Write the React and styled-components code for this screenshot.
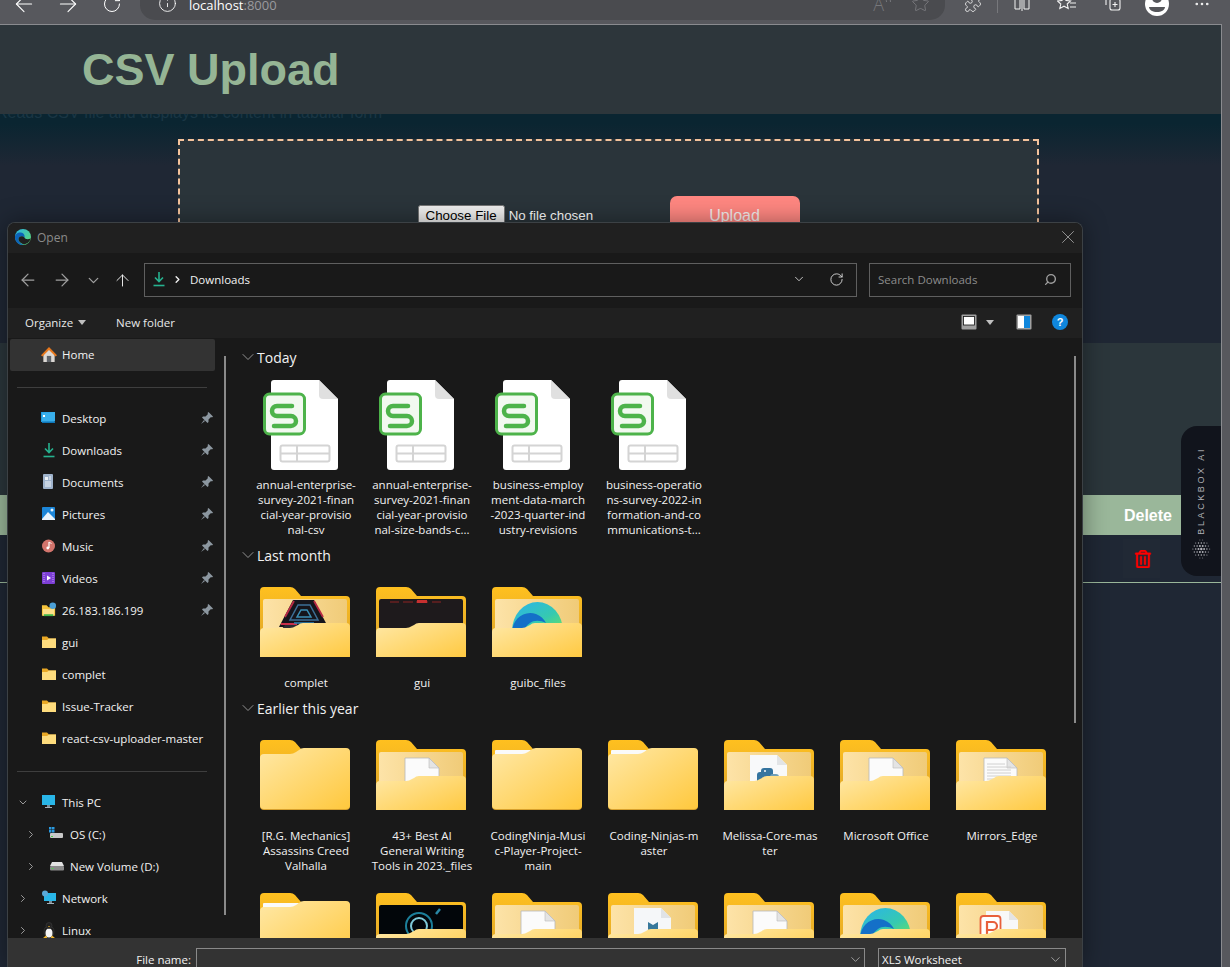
import React from "react"
import styled, { createGlobalStyle } from "styled-components"
import {
  ArrowLeft,
  ArrowRight,
  ArrowUp,
  ChevronDown,
  ChevronRight,
  Ellipsis,
  Info,
  Puzzle,
  RotateCw,
  Search,
  Star,
  X,
} from "lucide-react"
import { FaRegTrashAlt } from "react-icons/fa"

const GlobalStyle = createGlobalStyle`
  html, body {
    margin: 0;
    padding: 0;
    background: #57585d;
    overflow: hidden;
  }
  * {
    box-sizing: border-box;
  }
`

const winFont = `"Open Sans", "Noto Sans", sans-serif`
const webFont = `"Liberation Sans", Arial, sans-serif`

const quickAccess = [
  { icon: "desktop", label: "Desktop", pin: true },
  { icon: "download", label: "Downloads", pin: true },
  { icon: "document", label: "Documents", pin: true },
  { icon: "picture", label: "Pictures", pin: true },
  { icon: "music", label: "Music", pin: true },
  { icon: "video", label: "Videos", pin: true },
  { icon: "netfolder", label: "26.183.186.199", pin: true },
  { icon: "folder", label: "gui" },
  { icon: "folder", label: "complet" },
  { icon: "folder", label: "Issue-Tracker" },
  { icon: "folder", label: "react-csv-uploader-master" },
]

const drives = [
  { icon: "pc", label: "This PC", chevron: "down" },
  { icon: "osdrive", label: "OS (C:)", chevron: "right", depth: 1 },
  { icon: "drive", label: "New Volume (D:)", chevron: "right", depth: 1 },
  { icon: "network", label: "Network", chevron: "right" },
  { icon: "linux", label: "Linux", chevron: "right" },
]

const todayFiles = [
  ["annual-enterprise-", "survey-2021-finan", "cial-year-provisio", "nal-csv"],
  ["annual-enterprise-", "survey-2021-finan", "cial-year-provisio", "nal-size-bands-c..."],
  ["business-employ", "ment-data-march", "-2023-quarter-ind", "ustry-revisions"],
  ["business-operatio", "ns-survey-2022-in", "formation-and-co", "mmunications-t..."],
]

const lastMonth = [
  { kind: "complet", lines: ["complet"] },
  { kind: "gui", lines: ["gui"] },
  { kind: "edge", lines: ["guibc_files"] },
]

const earlier = [
  { kind: "plain", lines: ["[R.G. Mechanics]", "Assassins Creed", "Valhalla"] },
  { kind: "doc", lines: ["43+ Best AI", "General Writing", "Tools in 2023._files"] },
  { kind: "sliver", lines: ["CodingNinja-Musi", "c-Player-Project-", "main"] },
  { kind: "sliver", lines: ["Coding-Ninjas-m", "aster"] },
  { kind: "python", lines: ["Melissa-Core-mas", "ter"] },
  { kind: "doc", lines: ["Microsoft Office"] },
  { kind: "lines", lines: ["Mirrors_Edge"] },
  { kind: "sliver", lines: [""] },
  { kind: "dark", lines: [""] },
  { kind: "doc", lines: [""] },
  { kind: "mail", lines: [""] },
  { kind: "doc", lines: [""] },
  { kind: "edge", lines: [""] },
  { kind: "wps", lines: [""] },
]

const EdgeLogo = () => (
  <svg width="16" height="16" viewBox="0 0 16 16">
    <defs>
      <linearGradient id="edgeTop" x1="0" y1="0" x2="1" y2="1">
        <stop offset="0" stopColor="#2bb5e8" />
        <stop offset="1" stopColor="#62dd6a" />
      </linearGradient>
    </defs>
    <circle cx="8" cy="8" r="8" fill="url(#edgeTop)" />
    <path d="M0 8c0-3 3-5 6-4.500 3 .5 4 3 3.500 5-2-2-6-1.500-6 2 0 2.500 2.500 4.500 5 5.300C4 16.500 0 13 0 8z" fill="#0c63b8" />
    <path d="M9.500 8.500c.5 1.500 3 2.500 6.200 1-1 3.500-4 6-7.500 5.800-2.500-1-4.700-3-4.700-5 0-3.500 4-4 6-1.800z" fill="#1f1f1f" />
  </svg>
)

const SidebarIcon = ({ name }) => {
  switch (name) {
    case "home":
      return (
        <svg width="17" height="17" viewBox="0 0 17 17">
          <path d="M2.500 8v8.500h12V8L8.500 2.500z" fill="#dcd8d4" />
          <path d="M0 9.200 8.500.5l8.500 8.700-1.500 1.500-7-7-7 7z" fill="#e8781c" />
          <rect x="6.200" y="10" width="4.600" height="6.500" fill="#5f6368" />
        </svg>
      )
    case "desktop":
      return (
        <svg width="16" height="16" viewBox="0 0 16 16">
          <path d="M0 2h13v10H0z" fill="#1e9be0" />
          <path d="M1 2.500 14 2v9.500L1 12z" fill="#39aeea" />
          <rect x="2" y="5" width="2" height="2" fill="#fff" />
          <rect x="1" y="11.500" width="13" height="1.500" fill="#0e76b8" />
        </svg>
      )
    case "download":
      return (
        <svg width="16" height="16" viewBox="0 0 16 16" fill="none" stroke="#26b28f" strokeWidth="1.600">
          <path d="M8 1v9M4 6.500 8 10.500l4-4" />
          <path d="M2.500 14.500h11" />
        </svg>
      )
    case "document":
      return (
        <svg width="16" height="16" viewBox="0 0 16 16">
          <rect x="2" y="0" width="10" height="15" rx="1" fill="#9fb3cc" />
          <rect x="4" y="3" width="3" height="3" fill="#eef3f8" />
          <path d="M4 8h6M4 10h6M4 12h6" stroke="#eef3f8" />
          <path d="M8 3h2M8 5h2" stroke="#eef3f8" />
        </svg>
      )
    case "picture":
      return (
        <svg width="16" height="16" viewBox="0 0 16 16">
          <rect x="1" y="1" width="13" height="13" rx="1" fill="#1c86d8" />
          <path d="M1 13 7 6l7 7v1H1z" fill="#e9f4fc" />
          <circle cx="11" cy="4" r="1.500" fill="#e9f4fc" />
        </svg>
      )
    case "music":
      return (
        <svg width="16" height="16" viewBox="0 0 16 16">
          <circle cx="7.500" cy="8" r="6.500" fill="#d2746c" />
          <path d="M8 4v6" stroke="#fff" strokeWidth="1.200" />
          <path d="M8 4c1 1 2 1 2.500 1.500" stroke="#fff" fill="none" />
          <circle cx="6.800" cy="10" r="1.400" fill="#fff" />
        </svg>
      )
    case "video":
      return (
        <svg width="16" height="16" viewBox="0 0 16 16">
          <rect x="1" y="2" width="13" height="12" rx="1" fill="#7d3fd6" />
          <path d="M3 3v10M12 3v10" stroke="#c6a4f0" strokeDasharray="1 1" />
          <path d="M6 5.500v5l4-2.500z" fill="#fff" />
        </svg>
      )
    case "netfolder":
      return (
        <svg width="17" height="16" viewBox="0 0 17 16">
          <path d="M1 3h5l2 2h7v9H1z" fill="#f5c33b" />
          <rect x="2" y="7" width="12" height="7" fill="#fde08a" />
          <rect x="3" y="12.500" width="10" height="2" fill="#43b649" />
          <circle cx="12.500" cy="3.500" r="3.500" fill="#4b9fd6" />
        </svg>
      )
    case "folder":
      return (
        <svg width="16" height="16" viewBox="0 0 16 16">
          <path d="M1 2.500h5l2 2h7V14H1z" fill="#e9a825" />
          <path d="M1 6h5l2-1.500h7V14H1z" fill="#fedc7d" />
        </svg>
      )
    case "pc":
      return (
        <svg width="16" height="16" viewBox="0 0 16 16">
          <rect x="1" y="1" width="13" height="10" fill="#29b6e8" />
          <rect x="6" y="11" width="3" height="2" fill="#7a8b96" />
          <rect x="4" y="13" width="7" height="1" fill="#a3b2bb" />
        </svg>
      )
    case "osdrive":
      return (
        <svg width="16" height="16" viewBox="0 0 16 16">
          <rect x="0" y="1" width="2.500" height="2.500" fill="#2a9ae0" />
          <rect x="3" y="1" width="2.500" height="2.500" fill="#2a9ae0" />
          <rect x="0" y="4" width="2.500" height="2.500" fill="#2a9ae0" />
          <rect x="3" y="4" width="2.500" height="2.500" fill="#2a9ae0" />
          <rect x="1" y="7" width="13" height="5" rx="1" fill="#c8c8c8" />
          <rect x="2" y="10" width="2" height="1" fill="#4fd14f" />
        </svg>
      )
    case "drive":
      return (
        <svg width="16" height="16" viewBox="0 0 16 16">
          <path d="M3 4h10l2 4H1z" fill="#e2e2e2" />
          <rect x="1" y="8" width="14" height="4.500" rx="1" fill="#8b8b8b" />
          <rect x="2.500" y="10" width="2" height="1" fill="#4fd14f" />
        </svg>
      )
    case "network":
      return (
        <svg width="16" height="16" viewBox="0 0 16 16">
          <rect x="3" y="3" width="12" height="8" fill="#29b6e8" />
          <circle cx="4" cy="3.500" r="3" fill="#5aa9d8" />
          <rect x="8" y="11" width="3" height="2" fill="#7a8b96" />
          <rect x="6" y="13" width="7" height="1" fill="#a3b2bb" />
        </svg>
      )
    case "linux":
      return (
        <svg width="16" height="17" viewBox="0 0 16 17">
          <ellipse cx="8" cy="9.500" rx="5" ry="6" fill="#1b1b1b" stroke="#444" strokeWidth=".5" />
          <ellipse cx="8" cy="11" rx="3.500" ry="4.500" fill="#f4f4f4" />
          <circle cx="8" cy="3.500" r="3" fill="#222" stroke="#444" strokeWidth=".5" />
          <path d="M7 4h2l-1 1.200z" fill="#f0b429" />
          <path d="M2 16l3-2.500 1.500 3zM14 16l-3-2.500-1.500 3z" fill="#f0b429" />
        </svg>
      )
    default:
      return null
  }
}

const PinIcon = () => (
  <svg width="14" height="14" viewBox="0 0 14 14">
    <path d="M8.500 1 13 5.500 12 6.500 11 6 8.500 8.500 8.500 11 7.500 12 2 6.500 3 5.500 5.500 5.500 8 3 7.500 2z" fill="#8c97a0" />
    <path d="M4 9 1 13l4-3z" fill="#8c97a0" />
  </svg>
)

const SpreadsheetIcon = () => (
  <FileSvg width="90" height="92" viewBox="0 0 90 92">
    <path d="M13 0h45l19 19v68a3 3 0 0 1-3 3H13a3 3 0 0 1-3-3V3a3 3 0 0 1 3-3z" fill="#fff" />
    <path d="M58 0l19 19H62a4 4 0 0 1-4-4z" fill="#e0e0e0" />
    <rect x="3.500" y="14" width="40" height="40" rx="5" fill="#f2f9f0" stroke="#4db34a" strokeWidth="3" />
    <path d="M31 26H16a5 5 0 0 0 0 10h14a5 5 0 0 1 0 10H13" fill="none" stroke="#4db34a" strokeWidth="4.500" strokeLinecap="round" />
    <rect x="19.500" y="65.500" width="49" height="16" rx="2" fill="none" stroke="#d4d4d4" strokeWidth="2" />
    <path d="M19.500 73.500h49M36 65.500v16" stroke="#d4d4d4" strokeWidth="2" />
  </FileSvg>
)

const Paper = ({ x = 29, y = 18, w = 34 }) => (
  <g>
    <path d={`M${x} ${y}h${w - 10}l10 10v20h-${w}z`} fill="#fbfbfb" stroke="#b9b9b9" strokeWidth=".8" />
    <path d={`M${x + w - 10} ${y}l10 10h-10z`} fill="#e4e4e4" stroke="#b9b9b9" strokeWidth=".6" />
  </g>
)

const FolderInner = ({ kind }) => {
  switch (kind) {
    case "doc":
      return <Paper />
    case "python":
      return (
        <g>
          <path d="M26 15h27l10 10v25H26z" fill="#f8f9fa" />
          <path d="M53 15l10 10H53z" fill="#e2e4e6" />
          <rect x="33" y="32" width="14" height="12" rx="3" fill="#35749f" />
          <rect x="37" y="28" width="12" height="10" rx="3" fill="#35749f" />
          <rect x="46" y="34" width="9" height="10" rx="3" fill="#6f9fb8" />
          <circle cx="41" cy="31" r="1" fill="#f8f9fa" />
        </g>
      )
    case "lines":
      return (
        <g>
          <Paper x={28} y={18} w={33} />
          <path d="M31 24h18M31 27h24M31 30h24M31 33h24M31 36h24M31 39h24" stroke="#d0d0d0" strokeWidth="1" />
        </g>
      )
    case "edge":
      return (
        <g>
          <path d="M20 44a25.500 29 0 0 1 51 0z" fill="url(#folderEdge)" />
          <path d="M20 46c0-14 12-23 24-19 5 2 8 5 10 9-6-3-12-3-16 0-3 2-6 6-8 10z" fill="#1470c8" />
        </g>
      )
    case "complet":
      return (
        <g>
          <path d="M33 13h21l14 27H19z" fill="#15151c" />
          <path d="M38 18h12l8 15H30z" fill="none" stroke="#3d6f96" strokeWidth="1.500" />
          <path d="M41 23h6l4 7H37z" fill="none" stroke="#3b8fb5" strokeWidth="1.500" />
          <path d="M25 30l9-16M63 30l-9-16" stroke="#b72a45" strokeWidth="1.800" />
          <path d="M21 37h16M52 37h16" stroke="#c9304a" strokeWidth="1.800" />
          <path d="M34 36h20" stroke="#2c86b8" strokeWidth="1.500" />
          <path d="M17 48l8-10h12v10z" fill="#2c2c34" />
        </g>
      )
    case "gui":
      return (
        <g>
          <rect x="3" y="12" width="84" height="30" rx="2" fill="#1e1a1c" />
          <path d="M14 15h9M27 15h10M40 15h12M56 15h9" stroke="#8e2323" strokeWidth="1.200" />
          <rect x="41" y="13" width="10" height="3" fill="#c83030" />
        </g>
      )
    case "dark":
      return (
        <g>
          <rect x="3" y="12" width="84" height="36" rx="2" fill="#02060a" />
          <circle cx="43" cy="33" r="13" fill="none" stroke="#1c7f9a" strokeWidth="2" />
          <circle cx="43" cy="33" r="8" fill="none" stroke="#7fc9d8" strokeWidth="2" />
          <path d="M64 16l-4 5" stroke="#2a88a6" strokeWidth="2.500" />
        </g>
      )
    case "mail":
      return (
        <g>
          <path d="M26 15h27l10 10v25H26z" fill="#f5f7f9" />
          <path d="M53 15l10 10H53z" fill="#e0e3e6" />
          <path d="M40 29l5 3 5-3v10H40z" fill="#37789b" />
        </g>
      )
    case "wps":
      return (
        <g>
          <path d="M30 18h23l9 9v24H30z" fill="#f8f8f8" />
          <path d="M53 18l9 9h-9z" fill="#e4e4e4" />
          <rect x="24.500" y="23" width="20" height="28" rx="3" fill="#fff" stroke="#e8603c" strokeWidth="1.800" />
          <path d="M31 48V29h6a4 4 0 0 1 0 8h-6" fill="none" stroke="#e8603c" strokeWidth="2.200" />
        </g>
      )
    default:
      return null
  }
}

const Folder = ({ kind }) => {
  const closed = kind === "plain" || kind === "sliver"
  const frontPath = closed
    ? "M0 19a4 4 0 0 1 4-4h26q3 0 6-2l3-2q2-2 5-2h42a4 4 0 0 1 4 4v53a4 4 0 0 1-4 4H4a4 4 0 0 1-4-4z"
    : "M0 46a4 4 0 0 1 4-4h26q3 0 6-2l2-1q2-2 5-2h43a4 4 0 0 1 4 4v29a4 4 0 0 1-4 4H4a4 4 0 0 1-4-4z"
  return (
    <svg width="90" height="70" viewBox="0 0 90 70">
      <defs>
        <linearGradient id="folderFront" x1="0" y1="0" x2="1" y2="1">
          <stop offset="0" stopColor="#ffe8a6" />
          <stop offset="1" stopColor="#ffc83d" />
        </linearGradient>
        <linearGradient id="folderPaper" x1="0" y1="0" x2="1" y2="0">
          <stop offset="0" stopColor="#fde3a8" />
          <stop offset="1" stopColor="#f0cb78" />
        </linearGradient>
        <linearGradient id="folderBack" x1="0" y1="0" x2="0" y2="1">
          <stop offset="0" stopColor="#ffc01f" />
          <stop offset="1" stopColor="#d8a12e" />
        </linearGradient>
        <linearGradient id="folderEdge" x1="0" y1="0" x2="1" y2="1">
          <stop offset="0" stopColor="#2ab4ec" />
          <stop offset=".6" stopColor="#36c9b0" />
          <stop offset="1" stopColor="#6be25f" />
        </linearGradient>
      </defs>
      <path d="M4 0h26q3 0 5 2l6 7h45a4 4 0 0 1 4 4v53a4 4 0 0 1-4 4H4a4 4 0 0 1-4-4V4a4 4 0 0 1 4-4z" fill="url(#folderBack)" />
      {!closed && <rect x="3" y="12" width="84" height="36" rx="2" fill="url(#folderPaper)" />}
      {kind === "sliver" && <rect x="3" y="10" width="36" height="6" rx="1" fill="#fafafa" />}
      <FolderInner kind={kind} />
      <path d={frontPath} fill="url(#folderFront)" transform="translate(0 -1)" />
    </svg>
  )
}

const ViewIcon = () => (
  <svg width="16" height="16" viewBox="0 0 16 16">
    <rect x=".5" y=".5" width="15" height="15" rx="1" fill="#a0a0a0" />
    <rect x="2.500" y="2.500" width="11" height="8.500" fill="#fff" stroke="#111" strokeWidth=".8" />
  </svg>
)

const PaneIcon = () => (
  <svg width="16" height="16" viewBox="0 0 16 16">
    <rect x=".5" y=".5" width="15" height="15" rx="1" fill="#a0a0a0" />
    <rect x="2" y="2" width="6" height="12" fill="#fff" />
    <rect x="8" y="2" width="6" height="12" fill="#0f86dc" />
  </svg>
)

const FavoritesIcon = () => (
  <svg width="20" height="18" viewBox="0 0 20 18" fill="none" stroke="#f2f2f2" strokeWidth="1.100">
    <path d="M7 1l2 4.500 4.500.5-3.300 3 1 4.500L7 11.200 2.800 13.500l1-4.500L.5 6 5 5.500z" />
    <path d="M13 4h6M13 8h6M13 12h6" />
  </svg>
)

const CollectionsIcon = () => (
  <svg width="20" height="18" viewBox="0 0 20 18" fill="none" stroke="#f2f2f2" strokeWidth="1.100">
    <rect x="8" y="4" width="10" height="11" rx="2" />
    <path d="M13 7v5M10.500 9.500h5" />
    <path d="M4 10V3a2 2 0 0 1 2-2h5" />
  </svg>
)

const SplitIcon = () => (
  <svg width="18" height="18" viewBox="0 0 18 18" fill="none" stroke="#f2f2f2" strokeWidth="1">
    <path d="M2 2h5v12H2zM9 1v15M11 2h5v12h-5z" />
  </svg>
)

const ProfileIcon = () => (
  <svg width="24" height="24" viewBox="0 0 24 24">
    <circle cx="12" cy="12" r="12" fill="#fff" />
    <circle cx="12" cy="6" r="5" fill="#55565a" />
    <path d="M4 15h16c0 3-4 5-8 5s-8-2-8-5z" fill="#55565a" />
  </svg>
)

const BlackboxDots = () => {
  const dots = []
  for (let row = 0; row < 7; row++) {
    for (let col = 0; col < 8; col++) {
      const cx = 1.500 + col * 2.800 + (row % 2 ? 1.400 : 0)
      const cy = 1 + row * 3
      const dist = Math.hypot(cx - 11, cy - 10)
      if (dist > 9.800) continue
      const r = 1.250 - dist * 0.085
      dots.push(<circle key={`${row}-${col}`} cx={cx} cy={cy} r={r} fill="#b4b4ba" />)
    }
  }
  return (
    <svg width="22" height="20" viewBox="0 0 22 20">
      {dots}
    </svg>
  )
}

const TileLabel = ({ lines }) => (
  <Label>
    {lines.map((line, i) => (
      <LabelLine key={i}>{line}</LabelLine>
    ))}
  </Label>
)

const SidebarRow = ({ item }) => (
  <Row $depth={item.depth || 0}>
    <ChevronSlot>
      {item.chevron === "down" && <ChevronDown size={15} strokeWidth={2} />}
      {item.chevron === "right" && <ChevronRight size={15} strokeWidth={2} />}
    </ChevronSlot>
    <RowIcon>
      <SidebarIcon name={item.icon} />
    </RowIcon>
    <RowLabel>{item.label}</RowLabel>
    {item.pin && (
      <PinSlot>
        <PinIcon />
      </PinSlot>
    )}
  </Row>
)

const SectionTitle = ({ children }) => (
  <SectionHead>
    <ChevronDown size={20} strokeWidth={1} color="#a8a8a8" />
    <SectionName>{children}</SectionName>
  </SectionHead>
)

const App = () => {
  return (
    <Shell>
      <GlobalStyle />
      <BrowserBar>
        <ToolBtn>
          <ArrowLeft size={26} strokeWidth={1} color="#fff" />
        </ToolBtn>
        <ToolBtn>
          <ArrowRight size={26} strokeWidth={1} color="#fff" />
        </ToolBtn>
        <ToolBtn>
          <RotateCw size={20} strokeWidth={1.200} color="#fff" />
        </ToolBtn>
        <AddressBar>
          <Info size={19} strokeWidth={1.100} color="#fff" />
          <UrlText>
            localhost<UrlPort>:8000</UrlPort>
          </UrlText>
          <ReadAloud>
            A
            <svg width="8" height="12" viewBox="0 0 8 12" fill="none" stroke="#77787c">
              <path d="M1 4c1 .5 1.500 1.500 1.500 3M3 1c2 1 3.500 3 3.500 6" />
            </svg>
          </ReadAloud>
          <Star size={19} strokeWidth={1.100} color="#7b7c80" />
        </AddressBar>
        <ExtensionBtn>
          <Puzzle size={18} strokeWidth={1.100} color="#f2f2f2" />
        </ExtensionBtn>
        <BarDivider />
        <RightTools>
          <ToolBtn>
            <SplitIcon />
          </ToolBtn>
          <ToolBtn>
            <FavoritesIcon />
          </ToolBtn>
          <ToolBtn>
            <CollectionsIcon />
          </ToolBtn>
          <ToolBtn>
            <ProfileIcon />
          </ToolBtn>
          <ToolBtn>
            <Ellipsis size={18} strokeWidth={1.500} color="#f2f2f2" />
          </ToolBtn>
        </RightTools>
      </BrowserBar>
      <BrowserBody>
        <Page>
          <Header>
            <Title>CSV Upload</Title>
          </Header>
          <Subtitle>Reads CSV file and displays its content in tabular form</Subtitle>
          <UploadBox>
            <FileInput type="file" />
            <UploadButton>Upload</UploadButton>
          </UploadBox>
          <TableSection>
            <TableHead>
              <DeleteHead>Delete</DeleteHead>
            </TableHead>
            <TableRow>
              <TrashCell>
                <FaRegTrashAlt size={18} color="#ff0000" stroke="#ff0000" strokeWidth={12} />
              </TrashCell>
            </TableRow>
          </TableSection>
          <Blackbox>
            <BlackboxText>BLACKBOX AI</BlackboxText>
            <BlackboxDots />
          </Blackbox>
        </Page>
        <FrameEdge />
      </BrowserBody>

      <Dialog>
        <DialogTitle>
          <EdgeLogo />
          <DialogName>Open</DialogName>
          <CloseBtn>
            <X size={22} strokeWidth={1} color="#9a9a9a" />
          </CloseBtn>
        </DialogTitle>
        <NavBar>
          <NavBtn $w={34}>
            <ArrowLeft size={20} strokeWidth={1.500} color="#a0a0a0" />
          </NavBtn>
          <NavBtn $w={34}>
            <ArrowRight size={20} strokeWidth={1.500} color="#a0a0a0" />
          </NavBtn>
          <NavBtn $w={28}>
            <ChevronDown size={17} strokeWidth={1.800} color="#a0a0a0" />
          </NavBtn>
          <NavBtn $w={30}>
            <ArrowUp size={19} strokeWidth={1.200} color="#f0f0f0" />
          </NavBtn>
          <PathBox>
            <SidebarIcon name="download" />
            <PathSep>
              <ChevronRight size={11} strokeWidth={3} color="#f0f0f0" />
            </PathSep>
            <PathText>Downloads</PathText>
            <PathEnd>
              <ChevronDown size={14} strokeWidth={1.500} color="#d8d8d8" />
              <RotateCw size={15} strokeWidth={1.500} color="#d8d8d8" />
            </PathEnd>
          </PathBox>
          <SearchBox>
            <SearchText>Search Downloads</SearchText>
            <SearchGlass>
              <Search size={13} strokeWidth={2.500} color="#a0a0a0" />
            </SearchGlass>
          </SearchBox>
        </NavBar>
        <CommandBar>
          <CommandText>Organize</CommandText>
          <Caret />
          <NewFolder>New folder</NewFolder>
          <CommandRight>
            <ViewIcon />
            <Caret $gap={9} />
            <PaneSlot>
              <PaneIcon />
            </PaneSlot>
            <HelpBadge>?</HelpBadge>
          </CommandRight>
        </CommandBar>
        <DialogMain>
          <Sidebar>
            <HomeRow>
              <SidebarRow item={{ icon: "home", label: "Home" }} />
            </HomeRow>
            <SideDivider $top={16} />
            {quickAccess.map(item => (
              <SidebarRow key={item.label} item={item} />
            ))}
            <SideDivider $top={17} />
            {drives.map(item => (
              <SidebarRow key={item.label} item={item} />
            ))}
            <SideScroll />
          </Sidebar>
          <Content>
            <SectionTitle>Today</SectionTitle>
            <TileGrid>
              {todayFiles.map((lines, i) => (
                <Tile key={i}>
                  <TileIcon>
                    <SpreadsheetIcon />
                  </TileIcon>
                  <TileLabel lines={lines} />
                </Tile>
              ))}
            </TileGrid>
            <SectionTitle>Last month</SectionTitle>
            <TileGrid>
              {lastMonth.map((f, i) => (
                <Tile key={i}>
                  <TileIcon>
                    <Folder kind={f.kind} />
                  </TileIcon>
                  <TileLabel lines={f.lines} />
                </Tile>
              ))}
            </TileGrid>
            <SectionTitle>Earlier this year</SectionTitle>
            <TileGrid>
              {earlier.map((f, i) => (
                <Tile key={i}>
                  <TileIcon>
                    <Folder kind={f.kind} />
                  </TileIcon>
                  <TileLabel lines={f.lines} />
                </Tile>
              ))}
            </TileGrid>
            <ContentScroll />
          </Content>
        </DialogMain>
        <DialogFooter>
          <FileNameLabel>File name:</FileNameLabel>
          <FileNameBox>
            <ChevronDown size={15} strokeWidth={1} color="#d8d8d8" />
          </FileNameBox>
          <TypeSelect>
            <span>XLS Worksheet</span>
            <ChevronDown size={15} strokeWidth={1} color="#d8d8d8" />
          </TypeSelect>
        </DialogFooter>
      </Dialog>
    </Shell>
  )
}

export default App

const Shell = styled.div`
  position: relative;
  width: 1230px;
  height: 967px;
  overflow: hidden;
  display: flex;
  flex-direction: column;
  background: #57585d;
`

const BrowserBar = styled.div`
  flex: none;
  height: 24px;
  display: flex;
  align-items: flex-end;
  padding-left: 2px;
  background: #57585d;
  overflow: hidden;
`

const ToolBtn = styled.div`
  flex: none;
  width: 44px;
  height: 18px;
  margin-bottom: 11px;
  display: flex;
  align-items: center;
  justify-content: center;
`

const AddressBar = styled.div`
  flex: none;
  width: 805px;
  height: 40px;
  margin-left: 6px;
  margin-bottom: 4px;
  padding: 0 15px 7px 18px;
  display: flex;
  align-items: flex-end;
  background: #4a4b4f;
  border-radius: 15px;
`

const UrlText = styled.span`
  margin-left: 12px;
  font: 13px/16px ${winFont};
  color: #fff;
`

const UrlPort = styled.span`
  color: #9a9a9e;
`

const ReadAloud = styled.span`
  margin-left: auto;
  margin-right: 19px;
  display: flex;
  align-items: flex-start;
  font: 300 18px/18px ${winFont};
  color: #77787c;
`

const ExtensionBtn = styled(ToolBtn)`
  margin-left: 6px;
`

const BarDivider = styled.div`
  flex: none;
  width: 1px;
  height: 14px;
  margin: 0 2px 11px;
  background: #77787c;
`

const RightTools = styled.div`
  flex: none;
  display: flex;
  align-items: flex-end;
  gap: 1px;
`

const BrowserBody = styled.div`
  flex: 1;
  display: flex;
  min-height: 0;
`

const FrameEdge = styled.div`
  flex: none;
  width: 9px;
  background: #57585d;
  border-left: 1px solid #8a8b8f;
`

const Page = styled.div`
  position: relative;
  flex: 1;
  min-width: 0;
  border-top: 1px solid #8a8b8f;
  font-family: ${webFont};
  background: linear-gradient(#0a2531 0, #0a2531 98px, #1f2734 140px, #1f2734 100%);
`

const Header = styled.header`
  position: relative;
  z-index: 1;
  height: 89px;
  padding: 22px 0 0 82px;
  background: #2d363b;
`

const Title = styled.h1`
  margin: 0;
  font: bold 45px/46px ${webFont};
  color: #95b595;
`

const Subtitle = styled.p`
  margin: -10px 0 17px -4px;
  font: 16px/18px ${webFont};
  color: #1a3644;
  white-space: nowrap;
`

const UploadBox = styled.div`
  width: 861px;
  height: 204px;
  margin-left: 178px;
  padding-top: 55px;
  display: flex;
  justify-content: center;
  align-items: flex-start;
  background: #2a343a;
  border: 2px dashed #f5c39c;
`

const FileInput = styled.input`
  width: 252px;
  margin-top: 9px;
  font: 13.333px ${webFont};
  color: #fff;
`

const UploadButton = styled.button`
  width: 130px;
  height: 40px;
  border: none;
  border-radius: 7px;
  background: #ff8781;
  font: 16px ${webFont};
  color: #f4eeee;
`

const TableSection = styled.section`
  padding-top: 152px;
  background: #2b363b;
`

const TableHead = styled.div`
  height: 40px;
  padding: 2px 49px 0 0;
  display: flex;
  justify-content: flex-end;
  align-items: center;
  background: #9ab79a;
`

const DeleteHead = styled.span`
  font: bold 16px ${webFont};
  color: #fff;
`

const TableRow = styled.div`
  height: 48px;
  padding: 4px 61px 0 0;
  display: flex;
  justify-content: flex-end;
  align-items: flex-start;
  background: #1f2734;
  border-bottom: 1px solid #9ab79a;
`

const TrashCell = styled.div`
  width: 37px;
  height: 39px;
  padding-left: 2px;
  display: flex;
  justify-content: center;
  align-items: center;
  background: #212935;
`

const Blackbox = styled.div`
  position: absolute;
  z-index: 2;
  top: 401px;
  right: 0;
  width: 40px;
  height: 150px;
  padding-top: 21px;
  display: flex;
  flex-direction: column;
  align-items: center;
  gap: 4px;
  background: #11141c;
  border-radius: 16px 0 0 16px;
`

const BlackboxText = styled.span`
  writing-mode: vertical-rl;
  transform: rotate(180deg);
  font: 9px/10px ${webFont};
  letter-spacing: 2.600px;
  color: #b0b0b6;
`

const Dialog = styled.div`
  position: absolute;
  z-index: 3;
  top: 222px;
  left: 7px;
  width: 1076px;
  height: 745px;
  display: flex;
  flex-direction: column;
  overflow: hidden;
  background: #191919;
  border: 1px solid #3c4145;
  border-bottom: none;
  border-radius: 8px 8px 0 0;
  box-shadow: 0 0 24px rgba(0, 0, 0, 0.4);
  font-family: ${winFont};
  font-size: 11.500px;
  color: #f2f2f2;
`

const DialogTitle = styled.div`
  flex: none;
  height: 30px;
  padding: 0 0 2px 7px;
  display: flex;
  align-items: center;
  background: #202020;
`

const DialogName = styled.span`
  margin-left: 6px;
  font-size: 12px;
  color: #8a8a8a;
`

const CloseBtn = styled.div`
  margin-left: auto;
  margin-right: 3px;
  display: flex;
`

const NavBar = styled.div`
  flex: none;
  height: 55px;
  padding: 10px 0 0 3px;
  display: flex;
  align-items: flex-start;
  background: #191919;
`

const NavBtn = styled.div`
  flex: none;
  width: ${p => p.$w}px;
  height: 34px;
  display: flex;
  align-items: center;
  justify-content: center;
`

const PathBox = styled.div`
  flex: none;
  width: 713px;
  height: 34px;
  margin-left: 7px;
  padding: 0 12px 2px 6px;
  display: flex;
  align-items: center;
  border: 1px solid #5f5f5f;
`

const PathSep = styled.span`
  margin: 0 7px 0 5px;
  display: flex;
`

const PathText = styled.span`
  color: #f2f2f2;
`

const PathEnd = styled.div`
  margin-left: auto;
  display: flex;
  align-items: center;
  gap: 23px;
`

const SearchBox = styled.div`
  flex: none;
  width: 202px;
  height: 34px;
  margin-left: 12px;
  padding: 0 13px 2px 8px;
  display: flex;
  align-items: center;
  justify-content: space-between;
  border: 1px solid #5f5f5f;
`

const SearchText = styled.span`
  color: #8c8c8c;
`

const SearchGlass = styled.span`
  display: flex;
  transform: scaleX(-1);
`

const CommandBar = styled.div`
  flex: none;
  height: 30px;
  padding: 0 0 2px 17px;
  display: flex;
  align-items: center;
  background: #202020;
`

const CommandText = styled.span`
  color: #e8e8e8;
`

const NewFolder = styled(CommandText)`
  margin-left: 30px;
`

const Caret = styled.span`
  width: 0;
  height: 0;
  margin-left: ${p => p.$gap || 5}px;
  border-left: 4.500px solid transparent;
  border-right: 4.500px solid transparent;
  border-top: 5px solid #c0c0c0;
`

const CommandRight = styled.div`
  margin-left: auto;
  margin-right: 14px;
  display: flex;
  align-items: center;
`

const PaneSlot = styled.span`
  margin: 0 20px 0 22px;
  display: flex;
`

const HelpBadge = styled.span`
  width: 16px;
  height: 16px;
  display: flex;
  align-items: center;
  justify-content: center;
  border-radius: 50%;
  background: #0f86dc;
  font: bold 11px/16px ${webFont};
  color: #fff;
`

const DialogMain = styled.div`
  flex: 1;
  display: flex;
  min-height: 0;
`

const Sidebar = styled.nav`
  position: relative;
  flex: none;
  width: 225px;
  margin-right: 2px;
  padding: 1px 18px 0 2px;
  overflow: hidden;
  background: #191919;
`

const Row = styled.div`
  height: 32px;
  padding-left: ${p => 7 + p.$depth * 8}px;
  padding-right: 1px;
  display: flex;
  align-items: center;
`

const HomeRow = styled.div`
  background: #333;
  border-radius: 2px;

  ${Row} {
    padding-bottom: 2px;
  }
`

const SideDivider = styled.div`
  height: 1px;
  margin: ${p => p.$top}px 8px 14px 7px;
  background: #3e3e3e;
`

const ChevronSlot = styled.span`
  flex: none;
  width: 12px;
  margin-right: 12px;
  display: flex;
  justify-content: center;
  color: #9a9a9a;
`

const RowIcon = styled.span`
  flex: none;
  width: 16px;
  margin-right: 5px;
  display: flex;
  justify-content: center;
`

const RowLabel = styled.span`
  white-space: nowrap;
`

const PinSlot = styled.span`
  margin-left: auto;
  display: flex;
`

const SideScroll = styled.div`
  position: absolute;
  top: 18px;
  left: 216px;
  width: 2px;
  height: 559px;
  background: #8a8a8a;
`

const Content = styled.section`
  position: relative;
  flex: 1;
  min-width: 0;
  padding-top: 8px;
  overflow: hidden;
  background: #191919;
`

const ContentScroll = styled.div`
  position: absolute;
  top: 18px;
  left: 839px;
  width: 2px;
  height: 367px;
  background: #8a8a8a;
`

const SectionHead = styled.div`
  height: 24px;
  padding: 0 0 2px 3px;
  display: flex;
  align-items: center;
`

const SectionName = styled.span`
  margin-left: -1px;
  font-size: 14px;
  color: #f2f2f2;
`

const TileGrid = styled.div`
  padding-left: 13px;
  padding-bottom: 7px;
  display: grid;
  grid-template-columns: repeat(7, 116px);
  row-gap: 1px;
`

const Tile = styled.div`
  min-width: 0;
`

const TileIcon = styled.div`
  height: 107px;
  padding-right: 2px;
  display: flex;
  align-items: center;
  justify-content: center;
`

const FileSvg = styled.svg`
  margin: 4px 0 0 2px;
`

const Label = styled.div`
  text-align: center;
`

const LabelLine = styled.div`
  height: 15px;
  font-size: 11.500px;
  line-height: 15px;
  white-space: nowrap;
`

const DialogFooter = styled.div`
  flex: none;
  height: 29px;
  padding-top: 10px;
  display: flex;
  overflow: hidden;
  background: #333;
`

const FileNameLabel = styled.span`
  flex: none;
  width: 183px;
  text-align: right;
  line-height: 24px;
`

const FileNameBox = styled.div`
  flex: none;
  width: 669px;
  height: 30px;
  margin-left: 5px;
  padding: 3px 1px 0 0;
  display: flex;
  justify-content: flex-end;
  align-items: flex-start;
  border: 1px solid #8a8a8a;
`

const TypeSelect = styled.div`
  flex: none;
  width: 188px;
  height: 30px;
  margin-left: 13px;
  padding: 3px 2px 0 3px;
  display: flex;
  justify-content: space-between;
  align-items: flex-start;
  border: 1px solid #8a8a8a;
`
